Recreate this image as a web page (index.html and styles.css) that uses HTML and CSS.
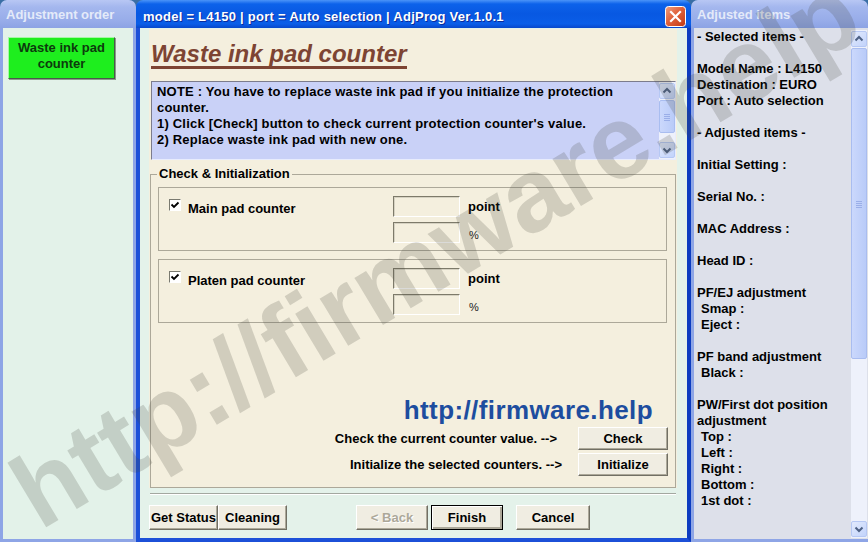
FILE: index.html
```html
<!DOCTYPE html>
<html lang="en">
    <head>
        <meta charset="UTF-8">
        <title>AdjProg - Waste ink pad counter</title>
        <link rel="stylesheet" href="styles.css">
    </head>

    <body>
        <div class="desk">
            <!-- left: adjustment order -->
            <div class="side side-left">
                <div class="side-title">Adjustment order</div>
                <div class="side-body">
                    <div class="order-item">Waste ink pad<br>counter</div>
                </div>
            </div>

            <!-- main dialog -->
            <div class="window">
                <div class="titlebar">
                    <span class="caption">model = L4150 | port = Auto selection | AdjProg Ver.1.0.1</span>
                    <span class="close-btn">
                        <svg width="21" height="21" viewBox="0 0 21 21">
                            <defs>
                                <linearGradient id="closeFill" x1="0" y1="0" x2="1" y2="1">
                                    <stop offset="0" stop-color="#f0a080"/>
                                    <stop offset="0.45" stop-color="#e0623c"/>
                                    <stop offset="1" stop-color="#c03812"/>
                                </linearGradient>
                            </defs>
                            <rect x="0.5" y="0.5" width="20" height="20" rx="3" fill="url(#closeFill)" stroke="#fff"/>
                            <path d="M6 6l9 9M15 6l-9 9" stroke="#fff" stroke-width="2.2" stroke-linecap="square"/>
                        </svg>
                    </span>
                </div>

                <div class="win-body">
                    <div class="panel">
                        <h1 class="heading"><span>Waste ink pad counter</span></h1>

                        <div class="note">
                            <div class="note-text">
                                NOTE : You have to replace waste ink pad if you initialize the protection<br>
                                counter.<br>
                                1) Click [Check] button to check current protection counter's value.<br>
                                2) Replace waste ink pad with new one.
                            </div>
                            <div class="vscroll">
                                <span class="sb-btn">
                                    <svg width="14" height="14" viewBox="0 0 14 14"><path d="M3.5 8.5L7 5l3.5 3.5" stroke="#4d6185" stroke-width="2" fill="none"/></svg>
                                </span>
                                <span class="sb-thumb sb-thumb-note">
                                    <svg width="8" height="8" viewBox="0 0 8 8"><path d="M1 1.5h6M1 3.5h6M1 5.5h6M1 7.5h6" stroke="#9aaee8" stroke-width="1"/></svg>
                                </span>
                                <span class="sb-track"></span>
                                <span class="sb-btn">
                                    <svg width="14" height="14" viewBox="0 0 14 14"><path d="M3.5 5.5L7 9l3.5-3.5" stroke="#4d6185" stroke-width="2" fill="none"/></svg>
                                </span>
                            </div>
                        </div>

                        <fieldset class="group">
                            <legend>Check &amp; Initialization</legend>

                            <div class="counter">
                                <div class="counter-name">
                                    <span class="check">
                                        <svg width="10" height="10" viewBox="0 0 10 10"><path d="M1.5 4.5L4 7l4.5-4.5" stroke="#000" stroke-width="1.8" fill="none"/></svg>
                                    </span>
                                    <span class="counter-label">Main pad counter</span>
                                </div>
                                <div class="fields">
                                    <div class="field-row"><span class="field"></span><span class="unit">point</span></div>
                                    <div class="field-row"><span class="field"></span><span class="unit unit-pct">%</span></div>
                                </div>
                            </div>

                            <div class="counter">
                                <div class="counter-name">
                                    <span class="check">
                                        <svg width="10" height="10" viewBox="0 0 10 10"><path d="M1.5 4.5L4 7l4.5-4.5" stroke="#000" stroke-width="1.8" fill="none"/></svg>
                                    </span>
                                    <span class="counter-label">Platen pad counter</span>
                                </div>
                                <div class="fields">
                                    <div class="field-row"><span class="field"></span><span class="unit">point</span></div>
                                    <div class="field-row"><span class="field"></span><span class="unit unit-pct">%</span></div>
                                </div>
                            </div>

                            <div class="brand">http://firmware.help</div>

                            <div class="action-row">
                                <span class="action-label">Check the current counter value. --&gt;</span>
                                <button class="btn btn-action">Check</button>
                            </div>
                            <div class="action-row action-row-init">
                                <span class="action-label">Initialize the selected counters. --&gt;</span>
                                <button class="btn btn-action">Initialize</button>
                            </div>
                        </fieldset>
                    </div>

                    <div class="separator"></div>

                    <div class="footer-buttons">
                        <button class="btn btn-status">Get Status</button>
                        <button class="btn btn-clean">Cleaning</button>
                        <button class="btn btn-back" disabled>&lt; Back</button>
                        <button class="btn btn-finish">Finish</button>
                        <button class="btn btn-cancel">Cancel</button>
                    </div>
                </div>
            </div>

            <!-- right: adjusted items -->
            <div class="side side-right">
                <div class="side-title">Adjusted items</div>
                <div class="side-body">
                    <div class="items">
                        <p>- Selected items -</p>
                        <p class="gap">Model Name : L4150</p>
                        <p>Destination : EURO</p>
                        <p>Port : Auto selection</p>
                        <p class="gap">- Adjusted items -</p>
                        <p class="gap">Initial Setting :</p>
                        <p class="gap">Serial No. :</p>
                        <p class="gap">MAC Address :</p>
                        <p class="gap">Head ID :</p>
                        <p class="gap">PF/EJ adjustment</p>
                        <p class="sub">Smap :</p>
                        <p class="sub">Eject :</p>
                        <p class="gap">PF band adjustment</p>
                        <p class="sub">Black :</p>
                        <p class="gap">PW/First dot position adjustment</p>
                        <p class="sub">Top :</p>
                        <p class="sub">Left :</p>
                        <p class="sub">Right :</p>
                        <p class="sub">Bottom :</p>
                        <p class="sub">1st dot :</p>
                    </div>
                    <div class="vscroll side-scroll">
                        <span class="sb-btn">
                            <svg width="14" height="14" viewBox="0 0 14 14"><path d="M3.5 8.5L7 5l3.5 3.5" stroke="#4d6185" stroke-width="2" fill="none"/></svg>
                        </span>
                        <span class="sb-thumb sb-thumb-side">
                            <svg width="8" height="8" viewBox="0 0 8 8"><path d="M1 1.5h6M1 3.5h6M1 5.5h6M1 7.5h6" stroke="#9aaee8" stroke-width="1"/></svg>
                        </span>
                        <span class="sb-track"></span>
                        <span class="sb-btn">
                            <svg width="14" height="14" viewBox="0 0 14 14"><path d="M3.5 5.5L7 9l3.5-3.5" stroke="#4d6185" stroke-width="2" fill="none"/></svg>
                        </span>
                    </div>
                </div>
            </div>
        </div>

        <div class="watermark">http://firmware.help</div>
    </body>
</html>
```

FILE: styles.css
```css
* {
    box-sizing: border-box;
}

body {
    margin: 0;
    width: 868px;
    height: 542px;
    overflow: hidden;
    position: relative;
    font-family: "Liberation Sans", Arial, sans-serif;
    font-size: 13px;
    font-weight: bold;
    color: #000;
    background: #3a6ea5;
}

.desk {
    display: flex;
    height: 542px;
}

/* inactive side windows */
.side {
    display: flex;
    flex-direction: column;
    height: 542px;
}

.side-left {
    width: 136px;
}

.side-right {
    width: 177px;
}

.side-title {
    flex: none;
    height: 28px;
    padding: 2px 6px 0;
    line-height: 26px;
    color: #e4eaf9;
    white-space: nowrap;
    background: linear-gradient(#b8c7f4, #a4b7ee 25%, #97ace9 75%, #8ca3e4);
    border-radius: 7px 7px 0 0;
}

.side-body {
    flex: 1;
    border: 3px solid #8ea5e6;
    border-top: 0;
}

.side-left .side-body {
    background: #e3f2e9;
}

.side-right .side-body {
    display: flex;
    padding-left: 3px;
    border-right: 0;
    background: #dde0ea;
}

.order-item {
    width: 107px;
    height: 42px;
    margin: 9px 0 0 5px;
    padding-top: 2px;
    text-align: center;
    line-height: 16px;
    color: #0d3a0d;
    background: #1eee1e;
    border: 1px solid;
    border-color: #a4f8a4 #4a5a4a #4a5a4a #a4f8a4;
    box-shadow: 1px 1px 0 #8a9a8a;
}

/* main dialog */
.window {
    width: 555px;
    display: flex;
    flex-direction: column;
}

.titlebar {
    flex: none;
    height: 28px;
    display: flex;
    align-items: center;
    padding: 4px 5px 0 7px;
    color: #fff;
    background: linear-gradient(#4a94f8, #0c62ea 4px, #0858e2 50%, #0a5ee8 85%, #0848cc);
    border-radius: 7px 7px 0 0;
}

.caption {
    flex: 1;
    white-space: nowrap;
    letter-spacing: 0.25px;
    text-shadow: 1px 1px #0a2c9c;
}

.close-btn {
    width: 21px;
    height: 21px;
    display: flex;
}

.win-body {
    flex: 1;
    display: flex;
    flex-direction: column;
    padding: 1px 10px 0 9px;
    background: #e4f2ea;
    border: 4px solid #1c50d8;
    border-top: 0;
    border-right-color: #0c3cc0;
}

.panel {
    height: 459px;
    display: flex;
    flex-direction: column;
    background: #f4efde;
}

.heading {
    display: flex;
    margin: 13px 0 0 2px;
    font-size: 24px;
    font-style: italic;
    line-height: 24px;
    color: #7d4433;
}

.heading span {
    border-bottom: 3px solid #7d4433;
}

.note {
    flex: none;
    display: flex;
    height: 79px;
    margin: 12px 1px 0 2px;
    background: #c9d1f7;
    border: 1px solid;
    border-color: #7c7c8c #e8ecfc #e8ecfc #7c7c8c;
}

.note-text {
    flex: 1;
    padding: 2px 0 0 5px;
    line-height: 16px;
    letter-spacing: 0.2px;
    white-space: nowrap;
}

/* xp style scrollbars */
.vscroll {
    width: 16px;
    display: flex;
    flex-direction: column;
    padding: 1px 0;
    background: #eef1fb;
}

.sb-btn {
    flex: none;
    width: 16px;
    height: 16px;
    display: flex;
    align-items: center;
    justify-content: center;
    background: linear-gradient(135deg, #e2eafd, #c2d3fb);
    border: 1px solid #b6c8f4;
    border-radius: 2px;
}

.sb-thumb {
    flex: none;
    display: flex;
    align-items: center;
    justify-content: center;
    margin-top: 1px;
    background: linear-gradient(90deg, #cbd8fc, #b9cbf8);
    border: 1px solid #a9bdf0;
    border-radius: 2px;
}

.sb-thumb-note {
    height: 33px;
}

.sb-thumb-side {
    height: 311px;
}

.sb-track {
    flex: 1;
}

.side-scroll {
    margin: 2px 1px 1px 0;
}

/* check & initialization group */
.group {
    flex: 1;
    min-width: 0;
    margin: 6px 1px 0;
    padding: 0 6px 11px;
    border: 1px solid #aca899;
}

.group legend {
    padding: 0 2px;
    line-height: 16px;
}

.counter {
    display: flex;
    height: 64px;
    margin: 5px 2px 0 1px;
    padding: 8px 10px 0;
    border: 1px solid #aca899;
}

.counter + .counter {
    margin-top: 8px;
}

.counter-name {
    width: 224px;
    display: flex;
    align-items: flex-start;
    padding-top: 3px;
    line-height: 16px;
}

.check {
    width: 12px;
    height: 12px;
    display: flex;
    margin-right: 7px;
    background: #fff;
    border: 1px solid;
    border-color: #7a7a70 #fff #fff #7a7a70;
}

.counter-label {
    padding-top: 2px;
}

.fields {
    display: flex;
    flex-direction: column;
    gap: 5px;
}

.field-row {
    display: flex;
    align-items: center;
}

.field {
    width: 67px;
    height: 21px;
    border: 1px solid;
    border-color: #7d7a6a #fff #fff #7d7a6a;
    box-shadow: inset 1px 1px #d6d2c2;
}

.unit {
    margin-left: 8px;
}

.unit-pct {
    margin: 4px 0 0 9px;
    font-size: 11px;
    font-weight: normal;
    color: #222;
}

.brand {
    margin: 74px 16px 0 0;
    text-align: right;
    font-size: 26px;
    line-height: 26px;
    letter-spacing: 0.4px;
    color: #1d4d9f;
}

.action-row {
    display: flex;
    justify-content: flex-end;
    align-items: center;
    margin-top: 4px;
}

.action-row + .action-row {
    margin-top: 3px;
}

.action-label {
    margin-right: 21px;
}

.action-row-init .action-label {
    margin-right: 16px;
}

/* buttons */
.btn {
    height: 25px;
    padding: 0;
    font: inherit;
    color: #000;
    background: #f0ede2;
    border: 1px solid;
    border-color: #fff #716f64 #716f64 #fff;
    box-shadow: inset -1px -1px #aca899;
}

.btn-action {
    width: 90px;
    height: 23px;
    margin-right: 1px;
}

.btn:disabled {
    color: #aca899;
    text-shadow: 1px 1px #fff;
}

.separator {
    height: 2px;
    margin: 5px 1px 0;
    border-top: 1px solid #a3a8a0;
    border-bottom: 1px solid #fff;
}

.footer-buttons {
    display: flex;
    margin-top: 10px;
}

.btn-status {
    width: 69px;
}

.btn-clean {
    width: 69px;
}

.btn-back {
    width: 72px;
    margin-left: 69px;
}

.btn-finish {
    width: 72px;
    margin-left: 3px;
    border-color: #000;
    box-shadow: inset 1px 1px #fff, inset -2px -2px #aca899;
}

.btn-cancel {
    width: 74px;
    margin-left: 13px;
}

/* adjusted items list */
.items {
    flex: 1;
    padding-top: 1px;
    line-height: 16px;
}

.items p {
    margin: 0;
}

.items .gap {
    margin-top: 16px;
}

.items .sub {
    padding-left: 4px;
}

/* diagonal watermark over everything */
.watermark {
    position: absolute;
    left: 40px;
    top: 443px;
    font-size: 104px;
    line-height: 104px;
    white-space: nowrap;
    color: rgba(70, 70, 60, 0.2);
    transform: rotate(-31deg);
    transform-origin: 0 88px;
    pointer-events: none;
}
```
